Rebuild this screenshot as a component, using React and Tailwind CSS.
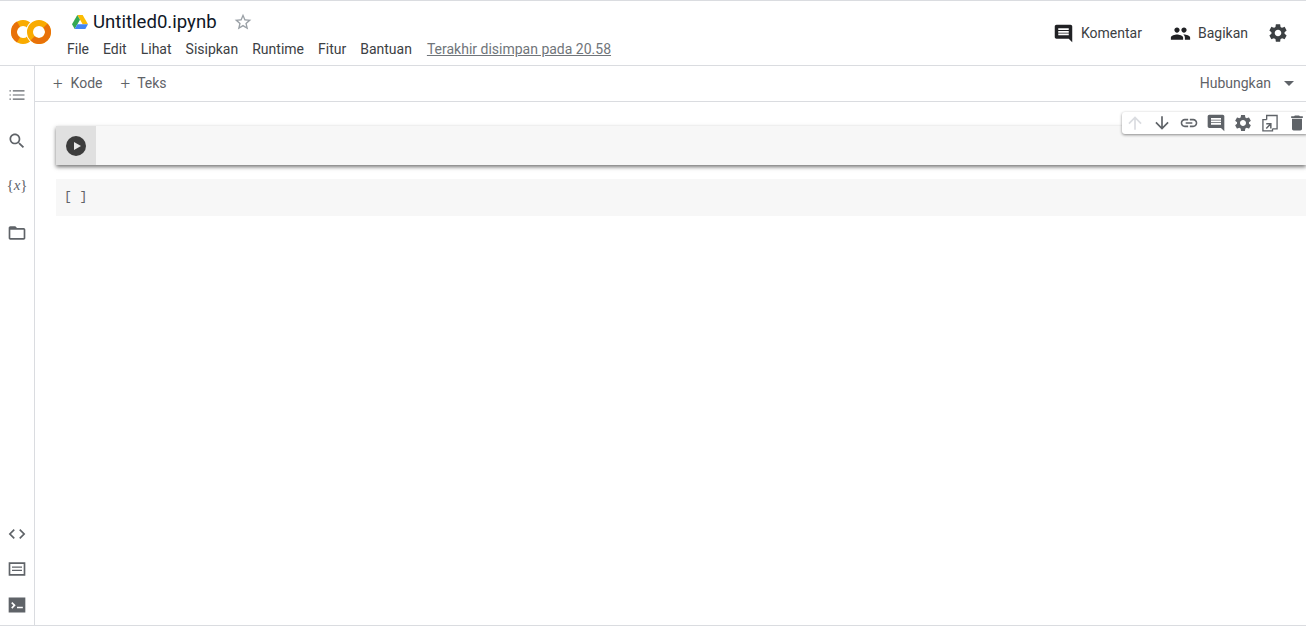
const paths = {
  comment: 'M21.99 4c0-1.1-.89-2-1.99-2H4c-1.1 0-2 .9-2 2v12c0 1.1.9 2 2 2h14l4 4-.01-18zM18 14H6v-2h12v2zm0-3H6V9h12v2zm0-3H6V6h12v2z',
  people: 'M16 11c1.66 0 2.99-1.34 2.99-3S17.66 5 16 5c-1.66 0-3 1.34-3 3s1.34 3 3 3zm-8 0c1.66 0 2.99-1.34 2.99-3S9.66 5 8 5C6.34 5 5 6.34 5 8s1.34 3 3 3zm0 2c-2.33 0-7 1.17-7 3.5V19h14v-2.5c0-2.33-4.67-3.5-7-3.5zm8 0c-.29 0-.62.02-.97.05 1.16.84 1.97 1.97 1.97 3.45V19h6v-2.5c0-2.33-4.67-3.5-7-3.5z',
  settings: 'M19.14 12.94c.04-.3.06-.61.06-.94 0-.32-.02-.64-.07-.94l2.03-1.58c.18-.14.23-.41.12-.61l-1.92-3.32c-.12-.22-.37-.29-.59-.22l-2.39.96c-.5-.38-1.03-.7-1.62-.94l-.36-2.54c-.04-.24-.24-.41-.48-.41h-3.84c-.24 0-.43.17-.47.41l-.36 2.54c-.59.24-1.13.57-1.62.94l-2.39-.96c-.22-.08-.47 0-.59.22L2.74 8.87c-.12.21-.08.47.12.61l2.03 1.58c-.05.3-.09.63-.09.94s.02.64.07.94l-2.03 1.58c-.18.14-.23.41-.12.61l1.92 3.32c.12.22.37.29.59.22l2.39-.96c.5.38 1.03.7 1.62.94l.36 2.54c.05.24.24.41.48.41h3.84c.24 0 .44-.17.47-.41l.36-2.54c.59-.24 1.13-.56 1.62-.94l2.39.96c.22.08.47 0 .59-.22l1.92-3.32c.12-.22.07-.47-.12-.61l-2.01-1.58zM12 15.6c-1.98 0-3.6-1.62-3.6-3.6s1.62-3.6 3.6-3.6 3.6 1.62 3.6 3.6-1.62 3.6-3.6 3.6z',
  list: 'M3 12.7h1.6v-1.4H3v1.4zm0 5h1.6v-1.4H3v1.4zm0-10h1.6V6.3H3v1.4zm4 5h14v-1.4H7v1.4zm0 5h14v-1.4H7v1.4zM7 6.300v1.4h14V6.300H7z',
  search: 'M15.5 14h-.79l-.28-.27C15.41 12.59 16 11.11 16 9.5 16 5.91 13.09 3 9.5 3S3 5.91 3 9.5 5.91 16 9.5 16c1.61 0 3.09-.59 4.23-1.57l.27.28v.79l5 4.99L20.49 19l-4.99-5zm-6 0C7.01 14 5 11.99 5 9.5S7.01 5 9.5 5 14 7.01 14 9.5 11.99 14 9.5 14z',
  folder: 'M20 6h-8l-2-2H4c-1.1 0-1.99.9-1.99 2L2 18c0 1.1.9 2 2 2h16c1.1 0 2-.9 2-2V8c0-1.1-.9-2-2-2zm0 12H4V8h16v10z',
  code: 'M9.4 16.6L4.8 12l4.6-4.6L8 6l-6 6 6 6 1.4-1.4zm5.2 0l4.6-4.6-4.6-4.6L16 6l6 6-6 6-1.4-1.4z',
  link: 'M3.9 12c0-1.71 1.39-3.1 3.1-3.1h4V7H7c-2.76 0-5 2.24-5 5s2.24 5 5 5h4v-1.9H7c-1.71 0-3.1-1.39-3.1-3.1zM8 13h8v-2H8v2zm9-6h-4v1.9h4c1.71 0 3.1 1.39 3.1 3.1s-1.39 3.1-3.1 3.1h-4V17h4c2.76 0 5-2.24 5-5s-2.24-5-5-5z',
  trash: 'M6 19c0 1.1.9 2 2 2h8c1.1 0 2-.9 2-2V7H6v12zM19 4h-3.5l-1-1h-5l-1 1H5v2h14V4z',
  down: 'M20 12l-1.41-1.41L13 16.17V4h-2v12.17l-5.58-5.59L4 12l8 8 8-8z',
  up: 'M4 12l1.41 1.41L11 7.83V20h2V7.83l5.58 5.59L20 12l-8-8-8 8z',
  star: 'M22 9.24l-7.19-.62L12 2 9.19 8.63 2 9.24l5.46 4.73L5.82 21 12 17.27 18.18 21l-1.63-7.03L22 9.24zM12 15.4l-3.76 2.27 1-4.28-3.32-2.88 4.38-.38L12 6.1l1.71 4.04 4.38.38-3.32 2.88 1 4.28L12 15.4z',
  keyboard: 'M2 4h20v16H2V4zm2 2v12h16V6H4zm2 3h12v1.500H6V9zm0 4h12v1.500H6V13z',
  terminal: 'M22 3H2v18h20V3zM6.400 16.400 5 15l2.600-2.600L5 9.800l1.400-1.400 4 4-4 4zM19 16h-7v-2h7v2z',
};

function Icon({ name, className }) {
  return (
    <svg viewBox="0 0 24 24" fill="currentColor" aria-hidden="true" className={className}>
      <path d={paths[name]} />
    </svg>
  );
}

// mirror-to-scratch icon, two offset sheets with an arrow in the front one
function MirrorIcon({ className }) {
  return (
    <svg viewBox="0 0 24 24" fill="none" stroke="currentColor" strokeWidth="1.6" aria-hidden="true" className={className}>
      <path d="M8 8V3h12.500v16H15" />
      <path d="M8 8H3.500v13.500H15V19" />
      <path d="M7.500 13h5.500v5.500M13 13l-5.500 5.500" strokeWidth="1.800" />
    </svg>
  );
}

function ColabLogo() {
  return (
    <svg viewBox="0 0 40 24" fill="none" strokeWidth="6" aria-hidden="true" className="h-[24px] w-[40px]">
      <path d="M18.500 5.800a9 9 0 1 0 0 12.400" stroke="#f9ab00" />
      <path d="M7.500 4.200a9 9 0 0 0 0 15.600" stroke="#e8710a" />
      <circle cx="28" cy="12" r="9" stroke="#ffffff" strokeWidth="8" />
      <circle cx="28" cy="12" r="9" stroke="#f9ab00" />
      <path d="M34.400 5.600a9 9 0 0 1-12.800 12.800" stroke="#e8710a" />
    </svg>
  );
}

function DriveLogo() {
  return (
    <svg viewBox="0 0 24 21" aria-hidden="true" className="h-[14px] w-[16px]">
      <path d="M8 0h8l8 14h-8z" fill="#fbbc04" />
      <path d="M8 0 0 14l4 7 8-14z" fill="#34a853" />
      <path d="M4 21h16l4-7H8z" fill="#4285f4" />
    </svg>
  );
}

function HeaderAction({ icon, label }) {
  return (
    <div className="flex items-center gap-[7px]">
      <Icon name={icon} className="h-[21px] w-[21px] text-[#202124]" />
      <span className="text-[14px] text-[#3c4043]">{label}</span>
    </div>
  );
}

function Header() {
  const menus = ['File', 'Edit', 'Lihat', 'Sisipkan', 'Runtime', 'Fitur', 'Bantuan'];
  return (
    <header className="flex h-[66px] shrink-0 items-stretch border-t border-b border-[#dadce0] pr-[17px]">
      <div className="flex w-[67px] shrink-0 items-center pb-[3px] pl-[11px]">
        <ColabLogo />
      </div>
      <div className="flex flex-col pt-[8px]">
        <div className="flex h-[26px] items-center">
          <div className="ml-[5px] flex items-center">
            <DriveLogo />
          </div>
          <span className="ml-[5px] text-[18.6px] leading-[26px] text-[#111827]">Untitled0.ipynb</span>
          <Icon name="star" className="ml-[16px] h-[20px] w-[20px] text-[#9aa0a6]" />
        </div>
        <div className="mt-[3px] flex h-[22px] items-center text-[14px] text-[#3c4043]">
          {menus.map((m) => (
            <span key={m} className="mr-[14px]">{m}</span>
          ))}
          <span className="ml-px text-[#70757a] underline">Terakhir disimpan pada 20.58</span>
        </div>
      </div>
      <div className="ml-auto flex items-center">
        <HeaderAction icon="comment" label="Komentar" />
        <div className="ml-[28px]">
          <HeaderAction icon="people" label="Bagikan" />
        </div>
        <Icon name="settings" className="ml-[19px] h-[22px] w-[22px] text-[#3c4043]" />
      </div>
    </header>
  );
}

function Sidebar() {
  return (
    <aside className="flex w-[35px] shrink-0 flex-col justify-between border-r border-[#dadce0] pt-[19px] pb-[10px] text-[#5f6368]">
      <div className="flex flex-col items-center gap-[26px]">
        <Icon name="list" className="h-[20px] w-[20px]" />
        <Icon name="search" className="h-[20px] w-[20px]" />
        <span className="flex h-[20px] items-center pb-[3px] font-['Liberation_Serif',serif] text-[15px]">
          {'{'}<i>x</i>{'}'}
        </span>
        <Icon name="folder" className="h-[20px] w-[20px]" />
      </div>
      <div className="flex flex-col items-center gap-[15px]">
        <Icon name="code" className="h-[20px] w-[20px]" />
        <Icon name="keyboard" className="h-[20px] w-[20px]" />
        <Icon name="terminal" className="mt-px h-[20px] w-[20px]" />
      </div>
    </aside>
  );
}

function CellToolbar() {
  return (
    <div className="absolute top-[10px] right-[-1px] flex h-[22px] items-center gap-[7px] rounded-l-[3px] bg-white pl-[3px] text-[#5f6368] shadow-[0_1px_3px_rgba(0,0,0,0.45)]">
      <Icon name="up" className="h-[20px] w-[20px] text-[#dadce0]" />
      <Icon name="down" className="h-[20px] w-[20px]" />
      <Icon name="link" className="h-[20px] w-[20px]" />
      <Icon name="comment" className="h-[20px] w-[20px]" />
      <Icon name="settings" className="h-[20px] w-[20px]" />
      <MirrorIcon className="h-[20px] w-[20px]" />
      <Icon name="trash" className="h-[20px] w-[20px]" />
    </div>
  );
}

export default function App() {
  return (
    <div className="flex h-[626px] w-[1306px] flex-col overflow-hidden bg-white font-[Roboto,sans-serif]">
      <Header />
      <div className="flex flex-1 border-b border-[#dadce0]">
        <Sidebar />
        <main className="flex min-w-0 flex-1 flex-col">
          <div className="flex h-[36px] shrink-0 items-center border-b border-[#dadce0] pr-[12px] pl-[18px] text-[14px] text-[#5f6368]">
            <span className="mr-[18px] flex items-center gap-[8px]">
              <span className="text-[17px] leading-none font-light">+</span>Kode
            </span>
            <span className="flex items-center gap-[7px]">
              <span className="text-[17px] leading-none font-light">+</span>Teks
            </span>
            <span className="ml-auto">Hubungkan</span>
            <span className="ml-[13px] h-0 w-0 border-x-[5px] border-t-[5px] border-x-transparent border-t-[#5f6368]" />
          </div>
          <div className="relative pt-[24px] pl-[21px]">
            <div className="flex h-[39px] bg-[#f7f7f7] shadow-[0_2px_4px_rgba(0,0,0,0.55)]">
              <div className="flex w-[40px] items-center justify-center bg-[#e0e0e0]">
                <span className="flex h-[20px] w-[20px] items-center justify-center rounded-full bg-[#3c3c3c]">
                  <span className="ml-[2px] h-0 w-0 border-y-[4.5px] border-l-[7px] border-y-transparent border-l-[#e8e8e8]" />
                </span>
              </div>
            </div>
            <CellToolbar />
            <div className="mt-[14px] flex h-[37px] items-center bg-[#f7f7f7] pb-[2px] pl-[8px] font-['Liberation_Mono',monospace] text-[13px] text-[#5f6368]">
              [ ]
            </div>
          </div>
        </main>
      </div>
    </div>
  );
}
